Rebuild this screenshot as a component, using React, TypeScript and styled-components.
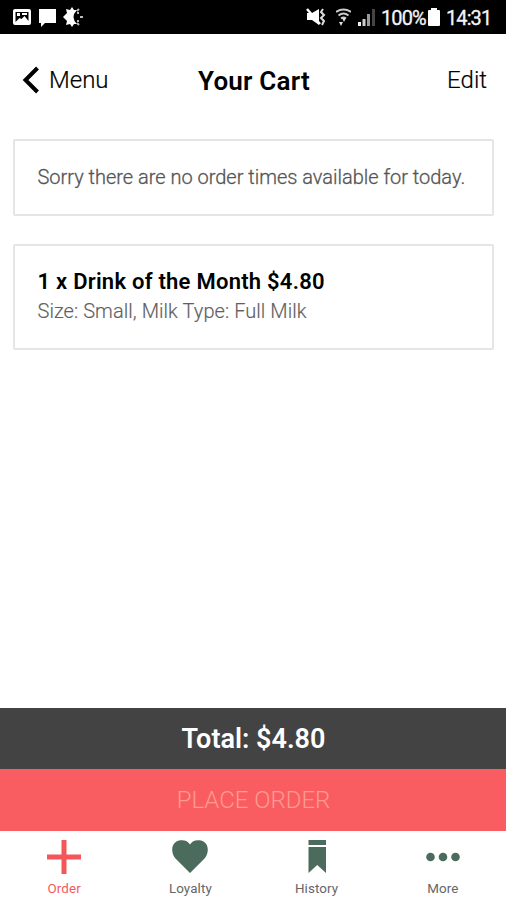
import React from "react";
import styled, { createGlobalStyle } from "styled-components";

const GlobalStyle = createGlobalStyle`
  * { box-sizing: border-box; }
  body { margin: 0; background: #fff; font-family: Roboto, "Liberation Sans", sans-serif; }
`;

const Screen = styled.div`
  display: flex;
  flex-direction: column;
  width: 506px;
  height: 900px;
  overflow: hidden;
  background: #fff;
  white-space: nowrap;
`;

const StatusBar = styled.div`
  display: flex;
  justify-content: space-between;
  height: 34px;
  flex: none;
  padding: 0 14px 0 12px;
  background: #000;
  color: #f4f4f4;
`;

const StatusGroup = styled.div`
  display: flex;
  align-items: center;
`;

const StatusIcon = styled.svg<{ $gap: number }>`
  display: block;
  flex: none;
  margin-right: ${(p) => p.$gap}px;
`;

const StatusText = styled.span<{ $width: number }>`
  width: ${(p) => p.$width}px;
  font-size: 20px;
  line-height: 34px;
  padding-top: 2px;
  letter-spacing: -0.9px;
  -webkit-text-stroke: 0.3px #f4f4f4;
`;

const Header = styled.header`
  display: grid;
  grid-template-columns: 1fr auto 1fr;
  align-items: center;
  height: 92px;
  flex: none;
  padding: 0 19px 0 21px;
  color: #000;
`;

const HeaderButton = styled.button<{ $end?: boolean }>`
  display: flex;
  align-items: center;
  gap: 10px;
  justify-self: ${(p) => (p.$end ? "end" : "start")};
  padding: 0;
  border: 0;
  background: none;
  color: #000;
  font: 300 24px/30px Roboto, sans-serif;
  -webkit-text-stroke: 0.2px #000;
`;

const Title = styled.h1`
  margin: 0;
  padding-top: 1px;
  font-size: 26px;
  line-height: 30px;
  font-weight: 600;
  letter-spacing: 0.22px;
`;

const Content = styled.main`
  display: flex;
  flex: 1;
  flex-direction: column;
  gap: 28px;
  padding: 13px 12px 0 13px;
`;

const Card = styled.section<{ $height: number }>`
  display: flex;
  flex-direction: column;
  justify-content: center;
  height: ${(p) => p.$height}px;
  padding: 0 22px 0 22.5px;
  border: 2px solid #e5e5e5;
  border-radius: 2px;
`;

const Notice = styled.p`
  margin: 0 0 1px;
  color: #555;
  font-size: 20px;
  line-height: 26px;
  font-weight: 300;
  letter-spacing: -0.01px;
  -webkit-text-stroke: 0.3px #555;
`;

const ItemName = styled.h2`
  margin: -3px 0 0;
  font-size: 22px;
  line-height: 30px;
  font-weight: 600;
  letter-spacing: 0.25px;
`;

const ItemOptions = styled.p`
  margin: 0;
  color: #606060;
  font-size: 20px;
  line-height: 28px;
  font-weight: 300;
  letter-spacing: 0.06px;
  -webkit-text-stroke: 0.15px #606060;
`;

const Total = styled.div`
  height: 61px;
  flex: none;
  padding: 1px 0 0 1px;
  background: #434343;
  color: #fff;
  text-align: center;
  font-size: 27px;
  line-height: 61px;
  font-weight: 600;
`;

const PlaceOrder = styled.button`
  height: 62px;
  flex: none;
  padding: 0 0 0 1px;
  border: 0;
  background: #fa5d61;
  color: #ff9a91;
  font: 300 24px/62px Roboto, sans-serif;
`;

const TabBar = styled.nav`
  display: grid;
  grid-template-columns: repeat(4, 1fr);
  height: 69px;
  flex: none;
  padding-left: 1px;
`;

const Tab = styled.a<{ $active?: boolean }>`
  display: flex;
  flex-direction: column;
  align-items: center;
  padding-top: 7px;
  color: ${(p) => (p.$active ? "#f6595c" : "#666")};
  font-size: 13.4px;
  line-height: 18px;
  letter-spacing: 0.1px;
`;

const TabIcon = styled.svg`
  display: block;
  width: 38px;
  height: 38px;
  margin-bottom: 4px;
`;

const green = "#4b6b5c";

export default function App() {
  return (
    <>
      <GlobalStyle />
      <Screen>
        <StatusBar>
          <StatusGroup>
            <StatusIcon $gap={7} width="20" height="20" viewBox="0 0 20 20">
              <path fill="#fff" fillRule="evenodd" d="M3 2h14q2 0 2 2v12q0 2-2 2H3q-2 0-2-2V4q0-2 2-2zM3.500 5v10l4-4 2 1 3-3 4 5V5z" />
              <path fill="#fff" d="M5 6h3v3H5zM10 6h5v2h-5z" />
            </StatusIcon>
            <StatusIcon $gap={5} width="18" height="19" viewBox="0 0 18 19">
              <path fill="#fff" d="M0 1h17v14H6l-4 4v-4H0z" />
            </StatusIcon>
            <StatusIcon $gap={0} width="21" height="20" viewBox="0 0 21 20">
              <path fill="#fff" d="M10 0l2 3h3q-7 7 0 14h-3l-2 3-2-3-4 1 1-4-4-4 4-4-1-4 4 1z" />
              <path stroke="#bbb" strokeWidth="2" d="M15 4l2-2M15 16l2 2M18 10h3M15 6h2M15 14h2" />
            </StatusIcon>
          </StatusGroup>
          <StatusGroup>
            <StatusIcon $gap={10} width="20" height="18" viewBox="0 0 20 18">
              <path fill="#fff" d="M1 5h5l7-4v16l-7-5H1z" />
              <path stroke="#fff" strokeWidth="2.500" d="M1 1l13 15" />
              <path fill="none" stroke="#ddd" strokeWidth="2" d="M17 1l-2 3 3 3-3 3 3 3-2 4" />
            </StatusIcon>
            <StatusIcon $gap={7} width="15" height="18" viewBox="0 0 15 18">
              <path fill="none" stroke="#ccc" strokeWidth="2" d="M0 4q7.500-5 15 0M2.500 7.500q5-4 10 0M5 10.500q2.500-2 5 0" />
              <path fill="#ddd" d="M6 10h4l-2 4zM3 14h4l-2 4z" />
            </StatusIcon>
            <StatusIcon $gap={6} width="17" height="18" viewBox="0 0 17 18">
              <path fill="#eee" d="M0 14h3v4H0z" />
              <path fill="#ccc" d="M4.500 11h3v7h-3z" />
              <path fill="#999" d="M9 6h3v12H9z" />
              <path fill="#444" d="M14 1h3v17h-3z" />
            </StatusIcon>
            <StatusText $width={47}>100%</StatusText>
            <StatusIcon $gap={6} width="12" height="18" viewBox="0 0 12 18">
              <path fill="#fff" d="M3 0h6v2h2q1 0 1 1v14q0 1-1 1H1q-1 0-1-1V3q0-1 1-1h2z" />
            </StatusIcon>
            <StatusText $width={46}>14:31</StatusText>
          </StatusGroup>
        </StatusBar>

        <Header>
          <HeaderButton>
            <svg width="18" height="28" viewBox="0 0 18 28">
              <path fill="none" stroke="#000" strokeWidth="4" d="M16.500 2L4.500 14l12 12" />
            </svg>
            Menu
          </HeaderButton>
          <Title>Your Cart</Title>
          <HeaderButton $end>Edit</HeaderButton>
        </Header>

        <Content>
          <Card $height={77}>
            <Notice>Sorry there are no order times available for today.</Notice>
          </Card>
          <Card $height={106}>
            <ItemName>1 x Drink of the Month $4.80</ItemName>
            <ItemOptions>Size: Small, Milk Type: Full Milk</ItemOptions>
          </Card>
        </Content>

        <Total>Total: $4.80</Total>
        <PlaceOrder>PLACE ORDER</PlaceOrder>

        <TabBar>
          <Tab $active>
            <TabIcon viewBox="0 0 38 38">
              <path stroke="#f4575a" strokeWidth="5" d="M19 2v34M2 19h34" />
            </TabIcon>
            Order
          </Tab>
          <Tab>
            <TabIcon viewBox="0 0 38 38">
              <path fill={green} d="M19 35L4 20C-1 13 1 4 8 2.500c5-1 9 .500 11 4 2-3.500 6-5 11-4 7 1.500 9 10.500 4 17.500z" />
            </TabIcon>
            Loyalty
          </Tab>
          <Tab>
            <TabIcon viewBox="0 0 38 38">
              <path fill={green} d="M10.500 2h17.500v5H10.500zM10.500 9h17.500v26l-8.750-8-8.750 8z" />
            </TabIcon>
            History
          </Tab>
          <Tab>
            <TabIcon viewBox="0 0 38 38">
              <circle cx="6.500" cy="19" r="4.300" fill={green} />
              <circle cx="19" cy="19" r="4.300" fill={green} />
              <circle cx="31.500" cy="19" r="4.300" fill={green} />
            </TabIcon>
            More
          </Tab>
        </TabBar>
      </Screen>
    </>
  );
}
